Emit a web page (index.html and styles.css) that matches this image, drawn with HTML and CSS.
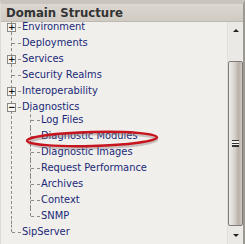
FILE: index.html
```html
<!DOCTYPE html>
<html lang="en">
<head>
    <meta charset="UTF-8">
    <title>Domain Structure</title>
    <link rel="stylesheet" href="styles.css">
</head>
<body>
    <section class="panel">
        <h2 class="panel__head">Domain Structure</h2>
        <div class="panel__body">
            <div class="panel__tree">
                <ul class="tree">
                    <li class="tree__item"><div class="tree__row"><span class="tree__toggle">+</span><a class="tree__link">Environment</a></div></li>
                    <li class="tree__item"><div class="tree__row"><a class="tree__link">Deployments</a></div></li>
                    <li class="tree__item"><div class="tree__row"><span class="tree__toggle">+</span><a class="tree__link">Services</a></div></li>
                    <li class="tree__item"><div class="tree__row"><a class="tree__link">Security Realms</a></div></li>
                    <li class="tree__item"><div class="tree__row"><span class="tree__toggle">+</span><a class="tree__link">Interoperability</a></div></li>
                    <li class="tree__item"><div class="tree__row"><span class="tree__toggle">&minus;</span><a class="tree__link">Diagnostics</a></div>
                        <ul class="tree tree_sub">
                            <li class="tree__item"><div class="tree__row"><a class="tree__link">Log Files</a></div></li>
                            <li class="tree__item"><div class="tree__row"><a class="tree__link">Diagnostic Modules</a></div></li>
                            <li class="tree__item"><div class="tree__row"><a class="tree__link">Diagnostic Images</a></div></li>
                            <li class="tree__item"><div class="tree__row"><a class="tree__link">Request Performance</a></div></li>
                            <li class="tree__item"><div class="tree__row"><a class="tree__link">Archives</a></div></li>
                            <li class="tree__item"><div class="tree__row"><a class="tree__link">Context</a></div></li>
                            <li class="tree__item"><div class="tree__row"><a class="tree__link">SNMP</a></div></li>
                        </ul>
                    </li>
                    <li class="tree__item"><div class="tree__row"><a class="tree__link">SipServer</a></div></li>
                </ul>

                <!-- red annotation round "Diagnostic Modules" -->
                <svg class="mark" width="140" height="22" viewBox="0 0 140 22">
                    <ellipse cx="68" cy="12" rx="64" ry="7" fill="none" stroke="#7a6a6a" stroke-opacity=".35" stroke-width="3" transform="rotate(-1.5 68 12)"/>
                    <ellipse cx="67" cy="10" rx="65" ry="7" fill="none" stroke="#c8141c" stroke-width="2.4" transform="rotate(-1.5 67 10)"/>
                </svg>
            </div>

            <div class="scrollbar">
                <div class="scrollbar__arrow scrollbar__arrow_up"></div>
                <div class="scrollbar__track">
                    <div class="scrollbar__thumb"><span class="scrollbar__grip"></span></div>
                </div>
                <div class="scrollbar__arrow scrollbar__arrow_down"></div>
            </div>
        </div>
    </section>
</body>
</html>
```

FILE: styles.css
```css
* {
    box-sizing: border-box;
}

html,
body {
    margin: 0;
    padding: 0;
    background: #f0efec;
}

/* ========== PANEL =========== */
.panel {
    width: 245px;
    height: 244px;
    display: flex;
    flex-direction: column;
    border-top: 4px solid #c9c5be;
    border-left: 1px solid #dedbd6;
    border-right: 2px solid #9c9892;
    overflow: hidden;
    font-family: "DejaVu Sans Condensed", "Liberation Sans", Arial, sans-serif;
}

.panel__head {
    position: relative;
    z-index: 2;
    flex: none;
    margin: 0;
    height: 18px;
    padding: 1px 0 0 5px;
    font-size: 13px;
    line-height: 16px;
    font-weight: bold;
    color: #333;
    background: linear-gradient(#dcd8d1, #cfcac2);
    border-bottom: 1px solid #bdb8b0;
}

.panel__body {
    flex: 1;
    display: flex;
    min-height: 0;
}

.panel__tree {
    flex: 1;
    position: relative;
    overflow: hidden;
}

/* ========== TREE =========== */
.tree {
    list-style: none;
    margin: 0;
    padding: 0;
    font-size: 11px;
}

.tree__item {
    position: relative;
    padding-left: 21px;
    white-space: nowrap;
}

.tree__row {
    height: 16px;
    line-height: 16px;
}

.tree__item::before {
    content: "";
    position: absolute;
    left: 11px;
    top: 8px;
    width: 9px;
    border-top: 1px dashed #8e8b86;
}

.tree__item::after {
    content: "";
    position: absolute;
    left: 10px;
    top: -8px;
    bottom: 0;
    border-left: 1px dashed #8e8b86;
}

.tree__item:last-child::after {
    bottom: auto;
    height: 16px;
}

.tree_sub .tree__item {
    padding-left: 19px;
}

.tree_sub .tree__item::before {
    left: 9px;
}

.tree_sub .tree__item::after {
    left: 8px;
    top: 0;
}

.tree_sub .tree__item:last-child::after {
    height: 8px;
}

.tree_sub .tree__item:first-child::after {
    top: -3px;
}

.tree__link {
    color: #1a2877;
    text-decoration: none;
}

.tree__toggle {
    position: absolute;
    z-index: 1;
    left: 6px;
    top: 4px;
    width: 9px;
    height: 9px;
    border: 1px solid #8a8781;
    background: #f7f6f3;
    color: #111;
    font-family: "DejaVu Sans", sans-serif;
    font-size: 9px;
    line-height: 7px;
    text-align: center;
    font-weight: bold;
}

.tree > .tree__item:first-child {
    margin-top: -3px;
}

.mark {
    position: absolute;
    left: 24px;
    top: 107px;
}

/* ========== SCROLLBAR =========== */
.scrollbar {
    width: 16px;
    display: flex;
    flex-direction: column;
    background: #ebe9e5;
    border-left: 1px solid #e2dfda;
}

.scrollbar__arrow {
    height: 17px;
    display: flex;
    align-items: center;
    justify-content: center;
}

.scrollbar__arrow::before {
    content: "";
    border-left: 3px solid transparent;
    border-right: 3px solid transparent;
}

.scrollbar__arrow_up::before {
    border-bottom: 3px solid #222;
}

.scrollbar__arrow_down::before {
    border-top: 3px solid #222;
}

.scrollbar__track {
    flex: 1;
    padding-top: 22px;
    padding-bottom: 1px;
}

.scrollbar__thumb {
    height: 100%;
    display: flex;
    align-items: center;
    justify-content: center;
    border: 1px solid #7f7b76;
    border-radius: 2px;
    background: linear-gradient(90deg, #efedea 0%, #d9d4ce 40%, #b8b0a9 75%, #cfc9c3 100%);
}

.scrollbar__grip {
    width: 7px;
    height: 7px;
    border-top: 1px solid #333;
    border-bottom: 1px solid #333;
    background: linear-gradient(#f0efec 0 2px, #333 2px 3px, #f0efec 3px 4px, #333 4px 5px, #f0efec 5px);
}
```
